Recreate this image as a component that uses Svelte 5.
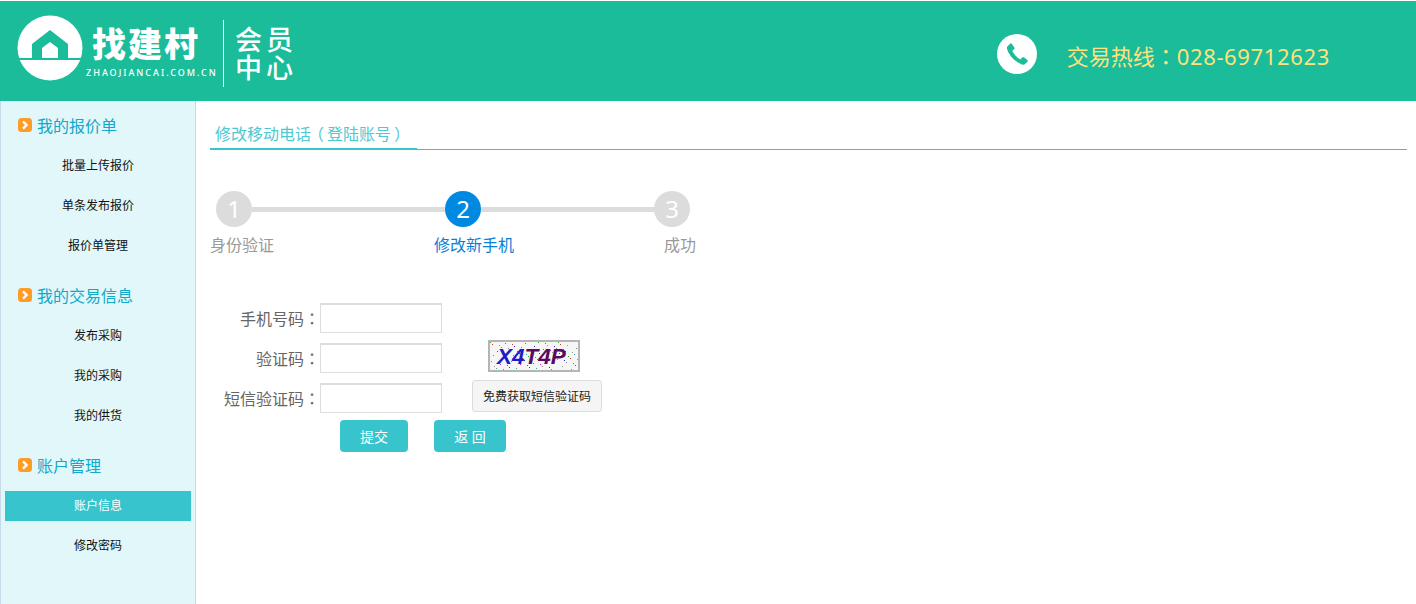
<script lang="ts">
	type Item = { label: string; active?: boolean };
	type Group = { title: string; items: Item[] };

	const groups: Group[] = [
		{ title: '我的报价单', items: [{ label: '批量上传报价' }, { label: '单条发布报价' }, { label: '报价单管理' }] },
		{ title: '我的交易信息', items: [{ label: '发布采购' }, { label: '我的采购' }, { label: '我的供货' }] },
		{ title: '账户管理', items: [{ label: '账户信息', active: true }, { label: '修改密码' }] }
	];

	// captcha noise
	const colors = ['#2a2', '#c33', '#33c', '#888', '#c3c', '#999', '#3aa'];
	const dots = Array.from({ length: 80 }, (_, i) => ({
		x: 2 + ((i * 37) % 88),
		y: 2 + ((i * 23) % 28),
		c: colors[i % colors.length]
	}));
</script>

<svelte:head><title>会员中心</title></svelte:head>

<div class="page">
	<header>
		<div class="brand">
			<svg class="mark" width="66" height="66" viewBox="0 0 66 66">
				<circle cx="33" cy="33" r="32.5" fill="#fff" />
				<path d="M33 15 L51 29 V43 H15 V29 Z" fill="#1abc9a" />
				<path d="M33 27 L25 33 V43 H41 V33 Z" fill="#fff" />
				<rect x="0" y="43" width="66" height="2" fill="#1abc9a" />
			</svg>
			<div class="name">
				<strong>找建村</strong>
				<small>ZHAOJIANCAI.COM.CN</small>
			</div>
			<div class="divider"></div>
			<div class="member"><span>会员</span><span>中心</span></div>
		</div>
		<div class="hotline">
			<svg width="40" height="40" viewBox="0 0 40 40">
				<circle cx="20" cy="20" r="20" fill="#fff" />
				<path
					d="M10.5 12.2 L13.4 9.6 Q14.2 9 14.9 9.9 L17.4 13.6 Q17.9 14.4 17.2 15 L15.6 16.4 Q15.2 16.9 15.6 17.6 Q18 22.4 22.6 25 Q23.3 25.4 23.8 24.9 L25.3 23.4 Q25.9 22.8 26.7 23.3 L30.4 26 Q31.2 26.7 30.6 27.5 L28 30 Q26.8 31 25 30.4 Q18.4 28 14 22.6 Q10.6 18 9.9 14.4 Q9.7 13 10.5 12.2 Z"
					fill="#1abc9a"
				/>
			</svg>
			<span class="hot-text">交易热线<span class="tc">：</span><span class="num">028-69712623</span></span>
		</div>
	</header>

	<div class="body">
		<aside>
			{#each groups as g}
				<section>
					<h3>
						<span class="arrow">
							<svg width="14" height="14" viewBox="0 0 14 14">
								<rect width="14" height="14" rx="3.5" fill="#ff9c27" />
								<path d="M5 3.4 L8.6 7 L5 10.6" fill="none" stroke="#fff" stroke-width="2.4" />
							</svg>
						</span>
						<span class="group-title">{g.title}</span>
					</h3>
					{#each g.items as it}
						<a class="item" class:active={it.active} href="#top">{it.label}</a>
					{/each}
				</section>
			{/each}
		</aside>

		<main>
			<div class="tabbar"><span class="tab">修改移动电话<span class="open">（</span>登陆账号<span class="close">）</span></span></div>

			<div class="track">
				<span class="dot">1</span>
				<span class="bar one"></span>
				<span class="dot on">2</span>
				<span class="bar two"></span>
				<span class="dot">3</span>
			</div>
			<div class="labels">
				<span class="l1">身份验证</span>
				<span class="l2">修改新手机</span>
				<span class="l3">成功</span>
			</div>

			<form onsubmit={(e) => e.preventDefault()}>
				<div class="row">
					<label for="phone">手机号码<span class="tc">：</span></label>
					<input id="phone" type="text" />
				</div>
				<div class="row">
					<label for="code">验证码<span class="tc">：</span></label>
					<input id="code" type="text" />
					<svg class="captcha" width="92" height="32" viewBox="0 0 92 32">
						<rect x="1" y="1" width="90" height="30" fill="#f6f6f6" stroke="#b5b5b5" stroke-width="2" />
						{#each dots as d}
							<rect x={d.x} y={d.y} width="1" height="1" fill={d.c} />
						{/each}
						<text x="9" y="24" class="cap"><tspan class="cap-a">X4</tspan><tspan class="cap-b">T4P</tspan></text>
					</svg>
				</div>
				<div class="row">
					<label for="sms">短信验证码<span class="tc">：</span></label>
					<input id="sms" type="text" />
					<button type="button" class="sms">免费获取短信验证码</button>
				</div>
				<div class="actions">
					<button type="submit" class="primary submit">提交</button>
					<button type="button" class="primary back">返 回</button>
				</div>
			</form>
		</main>
	</div>
</div>

<style>
	:global(body) {
		margin: 0;
		background: #fff;
		font-family: "Noto Sans", "Noto Sans CJK SC", sans-serif;
	}
	.tc {
		font-family: "Noto Sans CJK TC", sans-serif;
	}
	.page {
		height: 604px;
		overflow: hidden;
		display: flex;
		flex-direction: column;
	}
	header {
		height: 100px;
		margin-top: 1px;
		flex: none;
		background: #1abc9a;
		display: flex;
		align-items: flex-start;
		justify-content: space-between;
	}
	.brand {
		display: flex;
		align-items: flex-start;
		padding: 14px 0 0 17px;
	}
	.mark {
		display: block;
	}
	.name {
		margin-left: 1px;
		width: 138px;
		color: #fff;
	}
	.name strong {
		display: block;
		margin: 6px 0 0 8px;
		font: 800 34px/44px "Noto Sans CJK SC", sans-serif;
		letter-spacing: 2px;
		white-space: nowrap;
	}
	.name small {
		display: block;
		margin: 2px 0 0 2px;
		font: 500 9px/12px "Noto Sans", sans-serif;
		letter-spacing: 2px;
		white-space: nowrap;
	}
	.divider {
		width: 1px;
		height: 67px;
		margin: 5px 0 0 1px;
		background: #fff;
	}
	.member {
		margin: 10px 0 0 11px;
		color: #fff;
		display: flex;
		flex-direction: column;
		font: 500 27px/28px "Noto Sans CJK SC", sans-serif;
		letter-spacing: 4px;
		white-space: nowrap;
	}
	.hotline {
		display: flex;
		align-items: flex-start;
		gap: 30px;
		padding: 33px 86px 0 0;
		color: #ffe17d;
		font-size: 22px;
		line-height: 40px;
		white-space: nowrap;
	}
	.hotline svg {
		display: block;
	}
	.hot-text {
		margin-top: 1px;
	}
	.num {
		letter-spacing: 0.65px;
	}
	.body {
		flex: 1;
		display: flex;
		min-height: 0;
	}
	aside {
		width: 194px;
		flex: none;
		padding-top: 5px;
		background: #e1f7fa;
		border-left: 1px solid #c5d9e8;
		border-right: 1px solid #c5d9e8;
	}
	section {
		display: flex;
		flex-direction: column;
		padding-bottom: 10px;
	}
	h3 {
		margin: 0;
		height: 40px;
		padding-left: 17px;
		display: flex;
		align-items: center;
		gap: 5px;
		font-size: 16px;
		font-weight: 400;
		color: #12a8c9;
	}
	.group-title {
		margin-top: -2px;
	}
	.arrow {
		display: flex;
		margin-top: -3px;
	}
	.item {
		display: block;
		height: 30px;
		margin: 5px 4px;
		line-height: 30px;
		text-align: center;
		font-size: 12px;
		color: #111;
		text-decoration: none;
	}
	.item.active {
		background: #37c4cd;
		color: #fff;
	}
	main {
		flex: 1;
		min-width: 0;
		padding: 20px 9px 0 14px;
	}
	.tabbar {
		height: 28px;
		border-bottom: 1px solid #37c4cd;
		display: flex;
	}
	.tab {
		box-sizing: border-box;
		width: 207px;
		height: 29px;
		padding-left: 5px;
		border-bottom: 2px solid #37c4cd;
		font-size: 16px;
		line-height: 27px;
		color: #4ec8d2;
		white-space: nowrap;
	}
	.open {
		margin: 0 3px 0 -3px;
	}
	.close {
		margin-left: 3px;
	}
	.track {
		margin: 41px 0 0 6px;
		display: flex;
		align-items: center;
	}
	.dot {
		width: 36px;
		height: 36px;
		flex: none;
		border-radius: 50%;
		background: #dcdcdc;
		color: #fff;
		font-size: 24px;
		line-height: 36px;
		text-align: center;
	}
	.dot.on {
		background: #0089e0;
	}
	.bar {
		height: 5px;
		background: #dcdcdc;
	}
	.bar.one {
		width: 193px;
	}
	.bar.two {
		width: 173px;
	}
	.labels {
		margin-top: 5px;
		display: flex;
		font-size: 16px;
		line-height: 26px;
		color: #999;
	}
	.l1 {
		width: 224px;
	}
	.l2 {
		width: 230px;
		color: #0a7fd4;
	}
	form {
		margin-top: 45px;
	}
	.row {
		height: 30px;
		margin-bottom: 10px;
		display: flex;
		align-items: center;
	}
	label {
		width: 110px;
		text-align: right;
		font-size: 16px;
		color: #666;
		white-space: nowrap;
	}
	input {
		box-sizing: border-box;
		width: 122px;
		height: 30px;
		margin: 0;
		padding: 0 4px;
		border: 1px solid #ddd;
		border-top-width: 2px;
		background: #fff;
		outline: none;
	}
	.captcha {
		display: block;
		margin: -4px 0 0 46px;
	}
	.cap {
		font: italic 700 22.5px "Liberation Sans", sans-serif;
	}
	.cap-a {
		fill: #1c1cc8;
	}
	.cap-b {
		fill: #5a0a5e;
	}
	.sms {
		box-sizing: border-box;
		width: 130px;
		height: 32px;
		margin: -4px 0 0 30px;
		padding: 0;
		border: 1px solid #ddd;
		border-radius: 3px;
		background: #f5f5f5;
		color: #222;
		font: 12px "Noto Sans", "Noto Sans CJK SC", sans-serif;
	}
	.actions {
		display: flex;
		gap: 26px;
		padding-left: 130px;
		margin-top: -3px;
	}
	.primary {
		height: 32px;
		padding: 0;
		border: none;
		border-radius: 4px;
		background: #37c4cd;
		color: #fff;
		font: 14px "Noto Sans", "Noto Sans CJK SC", sans-serif;
	}
	.submit {
		width: 68px;
	}
	.back {
		width: 72px;
	}
</style>
